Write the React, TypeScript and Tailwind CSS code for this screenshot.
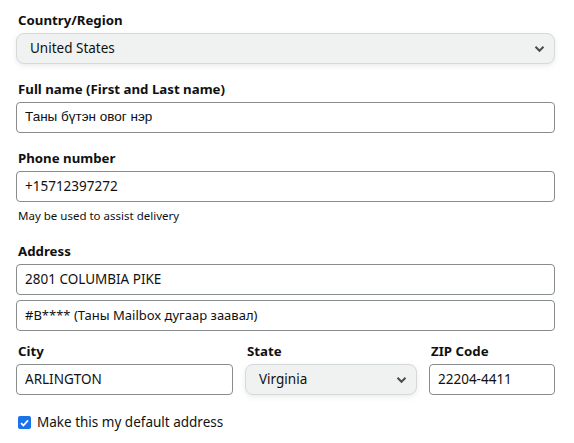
import React from "react";

const font = { fontFamily: '"Noto Sans", "Open Sans", sans-serif' };

function Chevron() {
  return (
    <svg width="11" height="8" viewBox="0 0 11 8" className="shrink-0">
      <path d="M1.5 1.8 L5.5 5.8 L9.5 1.8" fill="none" stroke="#4a4d4d" strokeWidth="2" />
    </svg>
  );
}

function Label({ children }: { children: React.ReactNode }) {
  return <div className="mb-[3px] pl-[2px] text-[13.25px] font-bold leading-[19px] text-[#0f1111]">{children}</div>;
}

function TextBox({ value, arial, small }: { value: string; arial?: boolean; small?: boolean }) {
  return (
    <div
      className={
        small
          ? "flex h-[31px] items-center rounded-[4px] border border-[#888c8c] bg-white px-[8px] text-[13px] text-[#0f1111]"
          : "flex h-[31px] items-center rounded-[4px] border border-[#888c8c] bg-white px-[8px] text-[13.5px] text-[#0f1111]"
      }
      style={arial ? { fontFamily: '"Liberation Sans", Arial, sans-serif' } : undefined}
    >
      {value}
    </div>
  );
}

function SelectBox({ value }: { value: string }) {
  return (
    <div className="flex h-[31px] items-center justify-between rounded-[8px] border border-[#d5d9d9] bg-[#f0f2f2] pl-[13px] pr-[9px] text-[13.5px] text-[#0f1111] shadow-[0_2px_5px_rgba(213,217,217,0.5)]">
      <span>{value}</span>
      <Chevron />
    </div>
  );
}

export default function App() {
  return (
    <div className="min-h-screen bg-white px-[16px] pt-[11px]" style={font}>
      <div className="w-[539px]">
        <Label>Country/Region</Label>
        <SelectBox value="United States" />

        <div className="mt-[16px]">
          <Label>Full name (First and Last name)</Label>
          <TextBox value="Таны бүтэн овог нэр" arial />
        </div>

        <div className="mt-[16px]">
          <Label>Phone number</Label>
          <TextBox value="+15712397272" />
          <div className="mt-[6px] pl-[2px] text-[11.5px] leading-[16px] text-[#0f1111]">May be used to assist delivery</div>
        </div>

        <div className="mt-[18px]">
          <Label>Address</Label>
          <TextBox value="2801 COLUMBIA PIKE" />
          <div className="mt-[5px]">
            <TextBox value="#B**** (Таны Mailbox дугаар заавал)" small />
          </div>
        </div>

        <div className="mt-[11px] grid grid-cols-[217px_172px_126px] gap-x-[12px]">
          <div>
            <Label>City</Label>
            <TextBox value="ARLINGTON" />
          </div>
          <div>
            <Label>State</Label>
            <SelectBox value="Virginia" />
          </div>
          <div>
            <Label>ZIP Code</Label>
            <TextBox value="22204-4411" />
          </div>
        </div>

        <label className="mt-[18px] flex items-center gap-[6px] pl-[2px] text-[13.5px] leading-[19px] text-[#0f1111]">
          <span className="flex h-[13px] w-[13px] items-center justify-center rounded-[2px] bg-[#1a73e8]">
            <svg width="9" height="8" viewBox="0 0 9 8">
              <path d="M1 4.2 L3.4 6.5 L8 1.3" fill="none" stroke="white" strokeWidth="1.8" />
            </svg>
          </span>
          <span>Make this my default address</span>
        </label>
      </div>
    </div>
  );
}
